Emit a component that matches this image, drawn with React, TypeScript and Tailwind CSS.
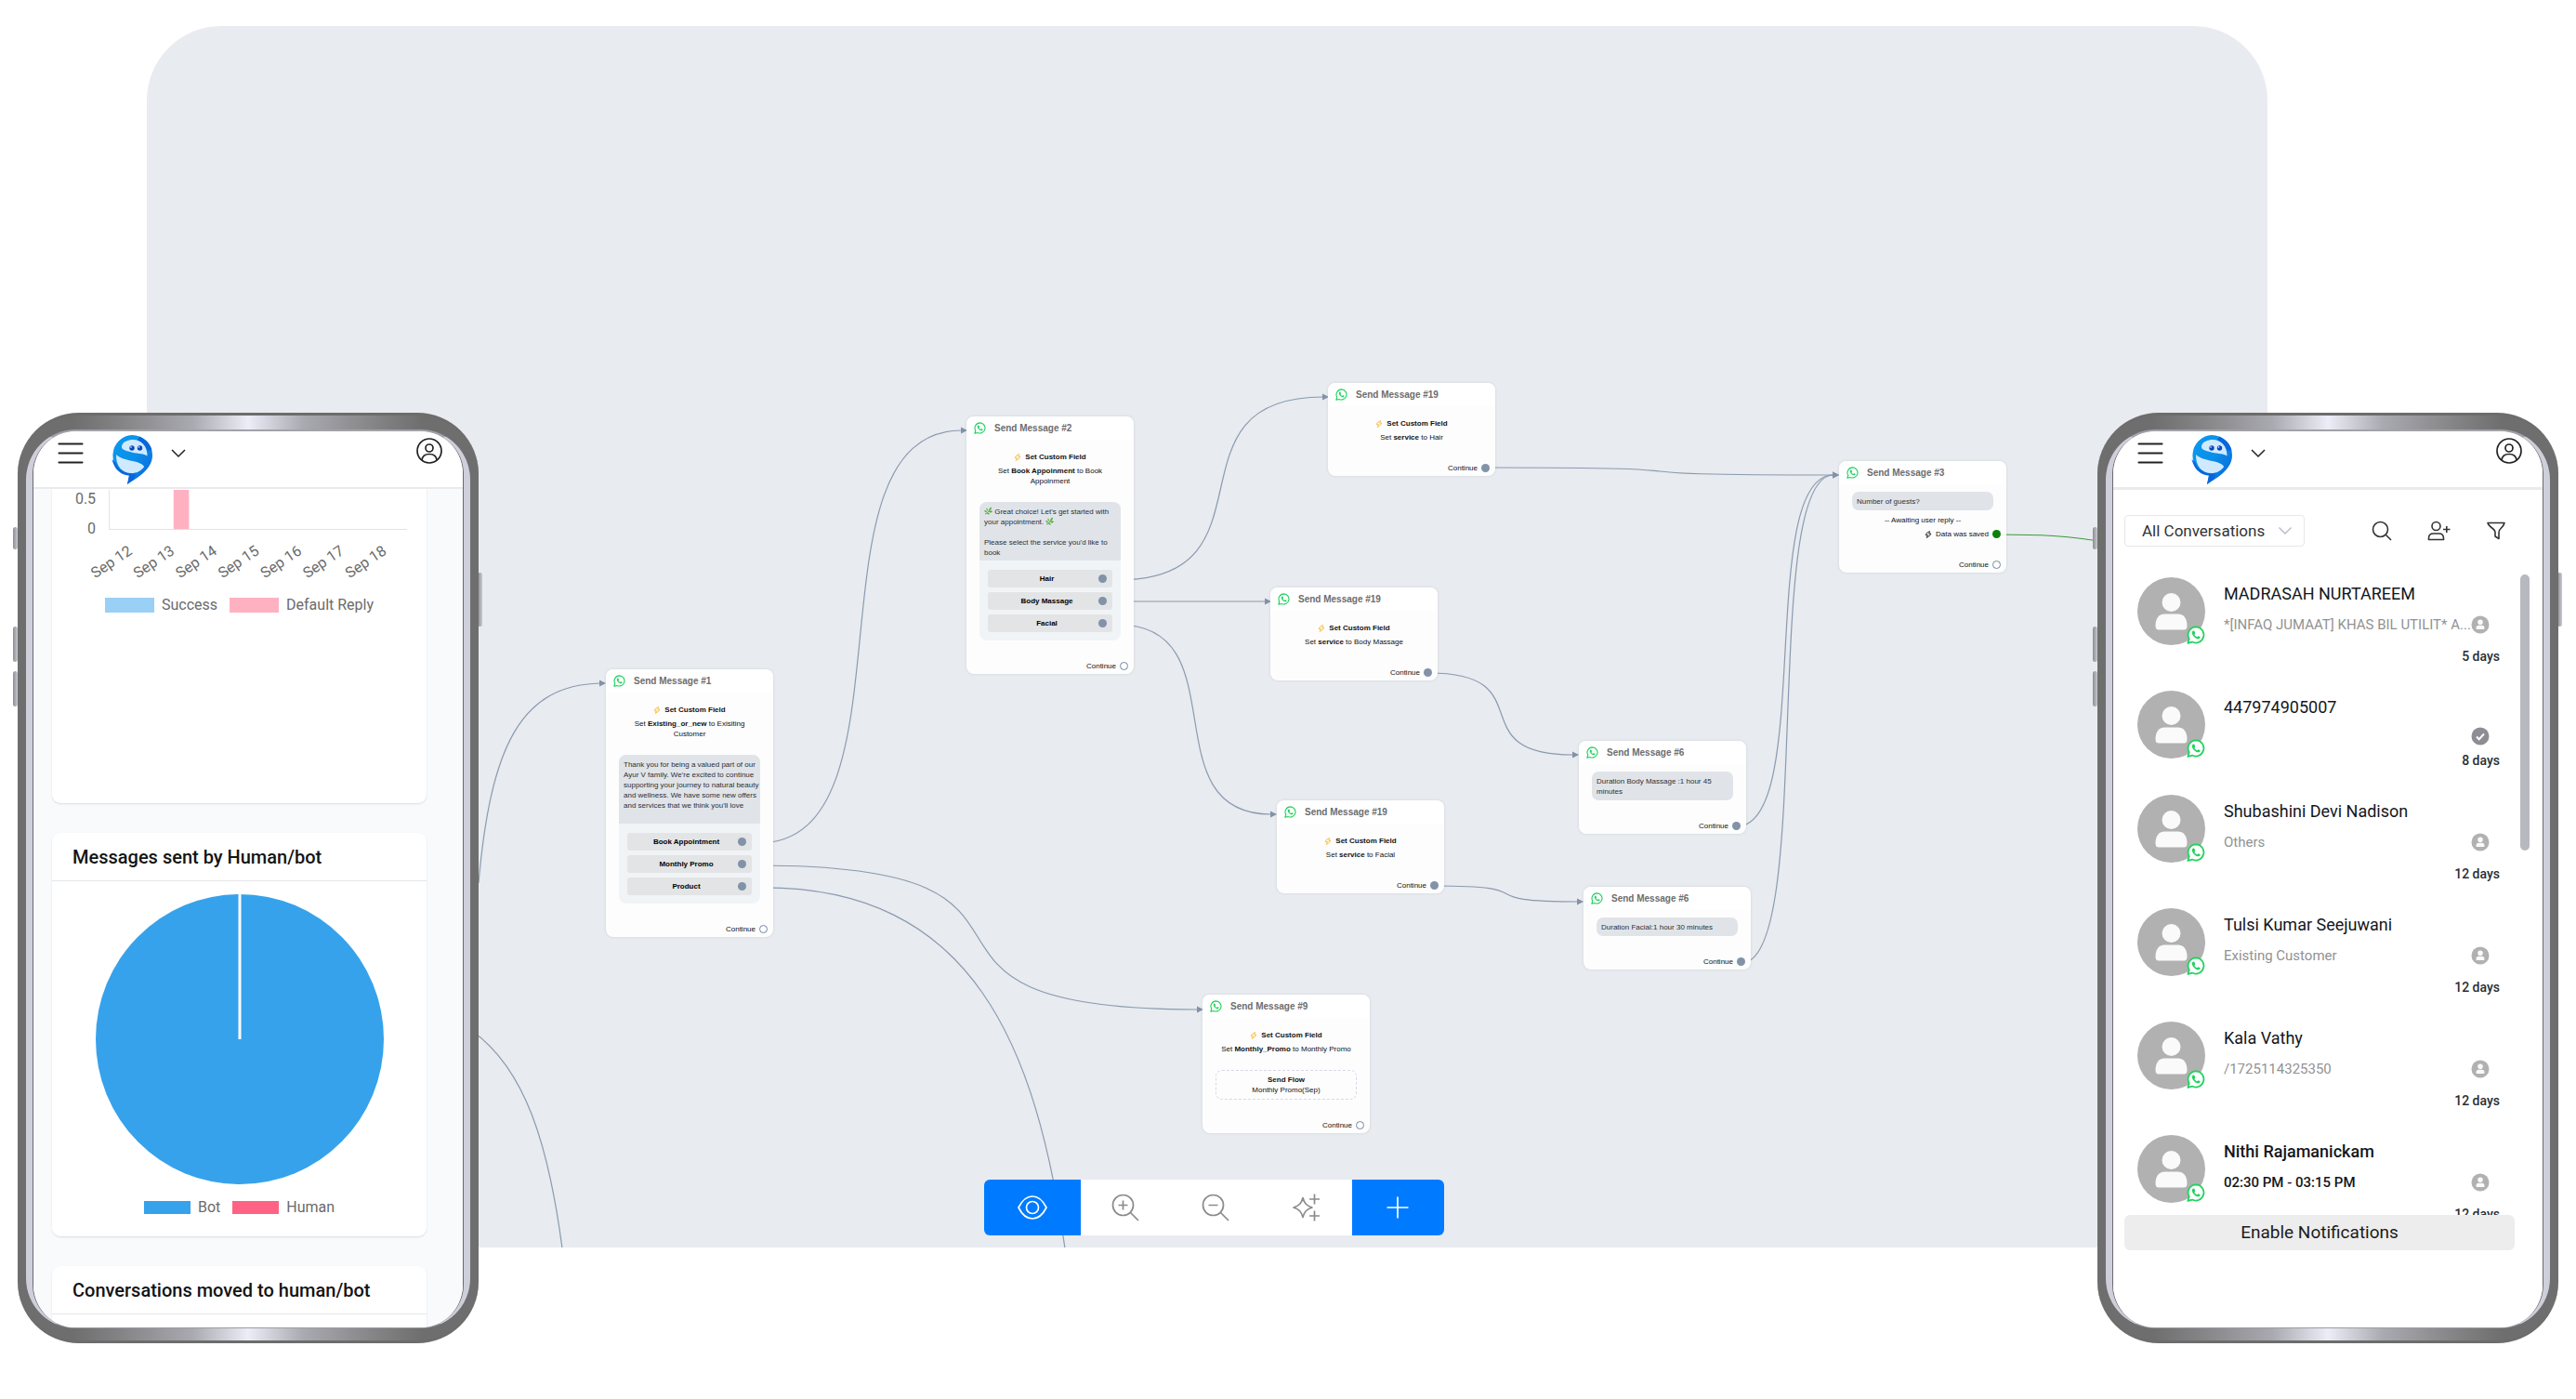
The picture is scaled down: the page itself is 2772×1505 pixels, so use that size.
import React from "react";

/* ---------- icons ---------- */

function WhatsAppIcon({ className, fill = "none" }: { className?: string; fill?: string }) {
  return (
    <svg viewBox="0 0 24 24" className={className} aria-hidden="true">
      <path
        d="M12.2 1.6a10.3 10.3 0 0 0-8.9 15.5L1.6 22.6l5.6-1.5A10.3 10.3 0 1 0 12.2 1.6Z"
        fill={fill}
        stroke="#1fd25e"
        strokeWidth="2.1"
        strokeLinejoin="round"
      />
      <path
        d="M8.7 6.6c-.5 0-1.7 1-1.7 2.6 0 3.400 4.400 7.900 8.100 7.900 1.500 0 2.600-1 2.600-2 0-.4-2.400-1.700-2.800-1.600-.5.1-1 1.300-1.400 1.300-.8 0-3.300-2.300-3.400-3.200 0-.4 1-.9 1-1.400 0-.6-.9-3.100-1.200-3.400-.2-.2-.8-.2-1.200-.2Z"
        fill="#1fd25e"
      />
    </svg>
  );
}

function Bolt({ className }: { className?: string }) {
  return (
    <svg viewBox="0 0 14 16" className={className} fill="none" stroke="currentColor" strokeWidth="1.7" strokeLinejoin="round" aria-hidden="true">
      <path d="M10 1 3 5.500 1.500 9.500 6 9 3.500 15 11 9.500 12.500 6 8.500 6.500 10 1Z" />
    </svg>
  );
}

function Leaf() {
  return (
    <svg viewBox="0 0 18 18" className="inline-block size-[9px] align-[-1px]" role="img" aria-label="herb">
      <path d="M2 16C7 15 10 11 12 6" stroke="#3f8a2c" strokeWidth="1.5" fill="none" />
      <path d="M11 9c-1-4 1-7 4-8 2 3 0 7-4 8Z" fill="#5cb644" />
      <path d="M10 11c3-3 6-2 8-1-1 3-5 4-8 1Z" fill="#4ba436" />
      <path d="M8 10C5 9 4 6 5 3c3 1 4 4 3 7Z" fill="#6cc551" />
      <path d="M6 13c-3 0-5-2-5.500-5C4 8 6 10 6 13Z" fill="#4ba436" />
      <path d="M6 14c2-1 5 0 6 2-2 2-5 1-6-2Z" fill="#5cb644" />
    </svg>
  );
}

function BotLogo() {
  return (
    <svg viewBox="0 0 44 54" className="h-[54px] w-11" role="img" aria-label="Chatbot logo">
      <defs>
        <linearGradient id="logo-ring" x1="0" y1="0" x2="1" y2="1">
          <stop offset="0" stopColor="#0a9bf0" />
          <stop offset=".5" stopColor="#0b8ee9" />
          <stop offset="1" stopColor="#0a5fd8" />
        </linearGradient>
      </defs>
      <path d="M22 0a22 22 0 0 1 22 22c0 9-6 16-13 21.500-5 4-10 6-14 9.500l2-9.500A22 22 0 0 1 22 0Z" fill="url(#logo-ring)" />
      <path d="M30 1.500c7 3 12 8 13.500 15l-5 0C37 12 33 8 28 6Z" fill="#0867dc" />
      <path d="M.5 26C3 37 10 43 19 43.500L17 53l7-5 2-6C14 42 6 36 4.500 30Z" fill="#0a66dc" />
      <path d="M11 12C12 7 18 5 23 5c9 0 15.500 7 15.500 17.500C34 19.500 26 20 20 18c-6-1.500-9.500-2.500-9-6Z" fill="#cfeaff" />
      <path d="M5 21c5 5 14 6 20 7.500 6 1.500 10 3.500 10 6C31 39 27 41 21.500 41 12 41 4.500 34 5 21Z" fill="#cfeaff" />
      <circle cx="22" cy="14" r="2.700" fill="#0a48bd" />
      <circle cx="30.500" cy="14" r="2.700" fill="#0a48bd" />
      <circle cx="21" cy="13" r=".8" fill="#fff" />
      <circle cx="29.500" cy="13" r=".8" fill="#fff" />
    </svg>
  );
}

/* ---------- flow canvas ---------- */

type Port = "open" | "linked";

function Dot({ port = "open" }: { port?: Port }) {
  return port === "linked" ? (
    <span className="size-[9px] shrink-0 rounded-full bg-[#8292a8]" />
  ) : (
    <span className="size-[9px] shrink-0 rounded-full border border-[#7386a0] bg-white" />
  );
}

function FlowNode({
  x,
  y,
  title,
  port = "open",
  children,
}: {
  x: number;
  y: number;
  title: string;
  port?: Port;
  children: React.ReactNode;
}) {
  return (
    <article
      className="absolute w-[180px] overflow-hidden rounded-[8px] bg-[#fdfdfd] text-center text-[8px] leading-[11px] text-[#111] shadow-[0_0_3px_rgba(60,70,90,0.15)]"
      style={{ left: x, top: y }}
    >
      <header className="flex h-[25px] items-center gap-[9px] bg-white px-2">
        <WhatsAppIcon className="size-[13px]" />
        <h3 className="text-[10px] font-bold text-[#6d6d6d]">{title}</h3>
      </header>
      <div className="px-[14px]">{children}</div>
      <footer className="mt-[22px] flex items-center justify-end gap-1 pr-[6px] pb-[3px]">
        Continue <Dot port={port} />
      </footer>
    </article>
  );
}

function SetField({ children }: { children: React.ReactNode }) {
  return (
    <div className="pt-[13px]">
      <p className="flex items-center justify-center gap-1 font-bold">
        <Bolt className="size-2 text-[#f7b733]" />
        Set Custom Field
      </p>
      <p className="mt-1">{children}</p>
    </div>
  );
}

function Choices({ message, options }: { message: React.ReactNode; options: string[] }) {
  return (
    <div className="mt-[17px] overflow-hidden rounded-[8px] bg-[#f1f4f6]">
      <div className="bg-[#e0e4e9] px-[5px] pt-[5px] pb-[3px] text-left whitespace-nowrap text-[#2c2f34]">{message}</div>
      <ul className="flex flex-col gap-[5px] px-[9px] pt-[10px] pb-[9px]">
        {options.map((o) => (
          <li key={o}>
            <button className="relative flex h-[19px] w-full items-center rounded-[3px] bg-[#e2e4e6] pr-[6px] font-bold text-black">
              <span className="grow pl-2">{o}</span>
              <Dot port="linked" />
            </button>
          </li>
        ))}
      </ul>
    </div>
  );
}

function Bubble({ children }: { children: React.ReactNode }) {
  return <div className="mt-2 rounded-[7px] bg-[#e0e4e9] px-[5px] pt-[5px] pb-1 text-left text-[#2c2f34]">{children}</div>;
}

const links: [number, number, number, number][] = [
  [658, 879, 883, 435],
  [658, 903, 1137, 1058],
  [1045, 596, 1272, 399],
  [1045, 619, 1210, 619],
  [1045, 644, 1216, 848],
  [1442, 475, 1821, 483],
  [1380, 696, 1541, 784],
  [1386, 925, 1546, 942],
  [1711, 861, 1821, 483],
  [1716, 1008, 1821, 483],
];

function Links() {
  return (
    <svg className="absolute top-0 left-0 size-full" fill="none" stroke="#8a9ab0" strokeWidth="1.2" aria-hidden="true">
      {links.map(([x1, y1, x2, y2], i) => {
        const end = x2 - 6;
        const k = (end - x1) * 0.8;
        return (
          <g key={i}>
            <path d={`M${x1} ${y1}C${x1 + k} ${y1} ${end - k} ${y2} ${end} ${y2}`} />
            <path d={`M${x2} ${y2}l-7 -3.500v7Z`} fill="#8292a8" stroke="none" />
          </g>
        );
      })}
      <path d="M357 922C370 775 402 709 488 707" />
      <path d="M494 707l-7 -3.500v7Z" fill="#8292a8" stroke="none" />
      <path d="M658 927C892 924 957 1102 988 1315" />
      <path d="M350 1081C407 1122 432 1202 447 1315" />
      <path d="M1991 547C2032 547 2072 548 2110 556" stroke="#3c9b3c" />
    </svg>
  );
}

function Toolbar() {
  const icon = "size-8";
  return (
    <div className="relative mb-[13px] ml-[14px] flex h-[60px] w-[495px] overflow-hidden rounded-[6px] bg-white" role="toolbar" aria-label="Canvas tools">
      <button aria-label="Preview" className="grid w-[104px] place-items-center bg-[#007bff] text-white">
        <svg viewBox="0 0 32 32" className={icon} fill="none" stroke="currentColor" strokeWidth="1.700">
          <path d="M1 16C5 8 10 4 16 4s11 4 15 12c-4 8-9 12-15 12S5 24 1 16Z" strokeLinejoin="round" />
          <circle cx="16" cy="16" r="6.500" />
        </svg>
      </button>
      <div className="flex grow justify-around text-[#8b8b8b]">
        <button aria-label="Zoom in" className="grid grow place-items-center">
          <svg viewBox="0 0 32 32" className={icon} fill="none" stroke="currentColor" strokeWidth="1.700">
            <circle cx="13.500" cy="13.500" r="11" />
            <path d="M21.500 21.500 30 30M8.500 13.500h10M13.500 8.500v10" />
          </svg>
        </button>
        <button aria-label="Zoom out" className="grid grow place-items-center">
          <svg viewBox="0 0 32 32" className={icon} fill="none" stroke="currentColor" strokeWidth="1.700">
            <circle cx="13.500" cy="13.500" r="11" />
            <path d="M21.500 21.500 30 30M8.500 13.500h10" />
          </svg>
        </button>
        <button aria-label="Auto arrange" className="grid grow place-items-center">
          <svg viewBox="0 0 32 32" className={icon} fill="none" stroke="currentColor" strokeWidth="1.700">
            <path d="M12 5.500c1.500 6 4 8.500 10 10.500-6 2-8.500 4.500-10 10.500C10.500 20.500 8 18 2 16c6-2 8.500-4.500 10-10.500Z" strokeLinejoin="round" />
            <path d="M19 7h11M24.500 1.500v11M19 25h11M24.500 19.500v11" />
          </svg>
        </button>
      </div>
      <button aria-label="Add step" className="grid w-[99px] place-items-center rounded-l-none bg-[#007bff] text-white">
        <svg viewBox="0 0 32 32" className={icon} fill="none" stroke="currentColor" strokeWidth="1.700">
          <path d="M4.500 16h23M16 4.500v23" />
        </svg>
      </button>
    </div>
  );
}

function FlowCanvas() {
  return (
    <section
      aria-label="Flow builder"
      className="relative col-start-1 row-start-1 mt-7 mr-[332px] mb-[163px] ml-[158px] flex items-end justify-center overflow-hidden rounded-t-[80px] bg-[#e8ebef] font-['Liberation_Sans',Arial,sans-serif]"
    >
      <Links />
      <FlowNode x={494} y={692} title="Send Message #1">
        <SetField>
          Set <b>Existing_or_new</b> to Exisiting
          <br />
          Customer
        </SetField>
        <Choices
          message={
            <>
              Thank you for being a valued part of our
              <br />
              Ayur V family. We're excited to continue
              <br />
              supporting your journey to natural beauty
              <br />
              and wellness. We have some new offers
              <br />
              and services that we think you'll love
              <br />
              &nbsp;
            </>
          }
          options={["Book Appointment", "Monthly Promo", "Product"]}
        />
      </FlowNode>
      <FlowNode x={882} y={420} title="Send Message #2">
        <SetField>
          Set <b>Book Appoinment</b> to Book
          <br />
          Appoinment
        </SetField>
        <Choices
          message={
            <>
              <Leaf /> Great choice! Let's get started with
              <br />
              your appointment. <Leaf />
              <br />
              <br />
              Please select the service you'd like to
              <br />
              book
            </>
          }
          options={["Hair", "Body Massage", "Facial"]}
        />
      </FlowNode>
      <FlowNode x={1271} y={384} title="Send Message #19" port="linked">
        <SetField>
          Set <b>service</b> to Hair
        </SetField>
      </FlowNode>
      <FlowNode x={1209} y={604} title="Send Message #19" port="linked">
        <SetField>
          Set <b>service</b> to Body Massage
        </SetField>
      </FlowNode>
      <FlowNode x={1216} y={833} title="Send Message #19" port="linked">
        <SetField>
          Set <b>service</b> to Facial
        </SetField>
      </FlowNode>
      <FlowNode x={1541} y={769} title="Send Message #6" port="linked">
        <Bubble>
          Duration Body Massage :1 hour 45
          <br />
          minutes
        </Bubble>
      </FlowNode>
      <FlowNode x={1546} y={926} title="Send Message #6" port="linked">
        <Bubble>Duration Facial:1 hour 30 minutes</Bubble>
      </FlowNode>
      <FlowNode x={1821} y={468} title="Send Message #3">
        <Bubble>Number of guests?</Bubble>
        <p className="mt-[5px]">-- Awaiting user reply --</p>
        <p className="-mr-2 mt-1 flex items-center justify-end gap-1">
          <Bolt className="size-2" />
          Data was saved
          <span className="size-[9px] rounded-full bg-[#0a820a]" />
        </p>
      </FlowNode>
      <FlowNode x={1136} y={1042} title="Send Message #9">
        <SetField>
          Set <b>Monthly_Promo</b> to Monthly Promo
        </SetField>
        <div className="mt-[17px] rounded-[7px] border border-dashed border-[#d5dae6] py-1">
          <p className="font-bold">Send Flow</p>
          <p>Monthly Promo(Sep)</p>
        </div>
      </FlowNode>
      <Toolbar />
    </section>
  );
}

/* ---------- phones ---------- */

function Phone({ side, label, children }: { side: "left" | "right"; label: string; children: React.ReactNode }) {
  const rail = "absolute w-[5px] rounded-sm bg-linear-to-r from-[#8d8d93] to-[#c9c9d2]";
  return (
    <section
      aria-label={label}
      className={
        "relative z-10 col-start-1 row-start-1 mx-[19px] mb-[60px] h-[1001px] w-[496px] self-end font-[Roboto,sans-serif] " +
        (side === "left" ? "justify-self-start" : "justify-self-end")
      }
    >
      <span className={rail + " top-[123px] -left-[5px] h-6"} />
      <span className={rail + " top-[230px] -left-[5px] h-[38px]"} />
      <span className={rail + " top-[278px] -left-[5px] h-[38px]"} />
      <span className={rail + " top-[172px] -right-[4px] h-[58px]"} />
      <div className="relative h-full rounded-[66px] border-y-[3px] border-[#6c6c6c] bg-[linear-gradient(90deg,#6e6e6e_0%,#6e6e6e_12%,#838385_22%,#a9a9b0_38%,#ededf8_50%,#a9a9b0_62%,#838385_78%,#6e6e6e_88%,#6e6e6e_100%)] px-[9px] pt-[15px] pb-[13px]">
        <div className="h-full rounded-[54px] border-x-[7px] border-t-2 border-b border-[#cfcfdb] border-t-[#a2a2a8] border-b-[#9c9ca2]">
          <div className="flex h-full flex-col overflow-hidden rounded-[46px] border-x border-[#6a6a70] bg-white">{children}</div>
        </div>
      </div>
    </section>
  );
}

function PhoneHeader() {
  return (
    <header className="flex h-[62px] shrink-0 items-start border-b-2 border-[#e8eaec] bg-white pr-[21px] pl-[26px] text-[#222]">
      <button aria-label="Menu" className="mt-3">
        <svg viewBox="0 0 28 23" className="h-[23px] w-7" stroke="currentColor" strokeWidth="2.100" strokeLinecap="round">
          <path d="M1.500 1.500h25M1.500 11.500h25M1.500 21.500h25" />
        </svg>
      </button>
      <div className="ml-[30px] pt-1">
        <BotLogo />
      </div>
      <button aria-label="Switch bot" className="mt-[19px] ml-5">
        <svg viewBox="0 0 16 10" className="h-[10px] w-4" fill="none" stroke="currentColor" strokeWidth="1.500">
          <path d="m1 1 7 7 7-7" />
        </svg>
      </button>
      <button aria-label="Account" className="mt-[6px] ml-auto">
        <svg viewBox="0 0 30 30" className="size-[30px]" fill="none" stroke="currentColor" strokeWidth="1.700">
          <circle cx="15" cy="15" r="13" />
          <circle cx="15" cy="12" r="4" />
          <path d="M7 25c.5-4.500 3.500-6.500 8-6.500s7.500 2 8 6.500" />
        </svg>
      </button>
    </header>
  );
}

function Legend({ items, swatch }: { items: { label: string; color: string }[]; swatch: string }) {
  return (
    <ul className="flex justify-center gap-[13px] text-base leading-5 text-[#6b6b6b]">
      {items.map((i) => (
        <li key={i.label} className="flex items-center gap-2">
          <span className={swatch + " " + i.color} />
          {i.label}
        </li>
      ))}
    </ul>
  );
}

const days = ["Sep 12", "Sep 13", "Sep 14", "Sep 15", "Sep 16", "Sep 17", "Sep 18"];
const cardClass = "shrink-0 rounded-[9px] bg-white shadow-[0_1px_2px_rgba(0,0,0,0.12)]";
const titleClass = "flex h-[52px] items-center border-b border-[#e4e6e8] px-[22px] text-[20px] font-medium text-[#141414]";

function AnalyticsPhone() {
  return (
    <Phone side="left" label="Analytics">
      <PhoneHeader />
      <div className="flex grow flex-col gap-8 overflow-hidden bg-[#f8fafc] pr-[39px] pl-5">
        <section className={cardClass + " h-[338px] rounded-t-none"}>
          <svg viewBox="0 0 402 104" className="w-full" role="img" aria-label="Replies per day">
            <g fontSize="16" fill="#6b6b6b" textAnchor="end">
              <text x="47" y="16">0.5</text>
              <text x="47" y="48">0</text>
              {days.map((d, i) => (
                <text key={d} transform={`translate(${87 + i * 45.500} 69) rotate(-34)`}>
                  {d}
                </text>
              ))}
            </g>
            <path d="M61.500 1v42.500H381" fill="none" stroke="#e2e2e2" />
            <rect x="130.500" y="1" width="16.500" height="42" fill="#ffb1c1" />
          </svg>
          <div className="mt-[11px]">
            <Legend
              swatch="h-[16px] w-[53px]"
              items={[
                { label: "Success", color: "bg-[#9ad0f5]" },
                { label: "Default Reply", color: "bg-[#ffb1c1]" },
              ]}
            />
          </div>
        </section>
        <section className={cardClass + " h-[434px]"}>
          <h2 className={titleClass}>Messages sent by Human/bot</h2>
          <svg viewBox="0 0 312 314" className="mx-auto mt-[13px] h-[314px] w-[312px]" role="img" aria-label="Messages by sender">
            <ellipse cx="156" cy="157" rx="155" ry="156" fill="#36a2eb" />
            <path d="M156 0v157" stroke="#fff" strokeWidth="3" />
          </svg>
          <div className="mt-[14px]">
            <Legend
              swatch="h-[14px] w-[50px]"
              items={[
                { label: "Bot", color: "bg-[#36a2eb]" },
                { label: "Human", color: "bg-[#ff6384]" },
              ]}
            />
          </div>
        </section>
        <section className={cardClass + " h-[120px]"}>
          <h2 className={titleClass}>Conversations moved to human/bot</h2>
        </section>
      </div>
    </Phone>
  );
}

type Chat = { name: string; text?: string; age: string; done?: boolean; unread?: boolean };

const chats: Chat[] = [
  { name: "MADRASAH NURTAREEM", text: "*[INFAQ JUMAAT] KHAS BIL UTILIT* A...", age: "5 days" },
  { name: "447974905007", age: "8 days", done: true },
  { name: "Shubashini Devi Nadison", text: "Others", age: "12 days" },
  { name: "Tulsi Kumar Seejuwani", text: "Existing Customer", age: "12 days" },
  { name: "Kala Vathy", text: "/1725114325350", age: "12 days" },
  { name: "Nithi Rajamanickam", text: "02:30 PM - 03:15 PM", age: "12 days", unread: true },
];

function ChatRow({ chat }: { chat: Chat }) {
  return (
    <li className="flex gap-5 pr-[32px] pl-[14px]">
      <div className="relative size-[73px] shrink-0">
        <svg viewBox="0 0 73 73" className="size-[73px]" aria-hidden="true">
          <circle cx="36.500" cy="36.500" r="36.500" fill="#b1b1b1" />
          <circle cx="36.500" cy="27" r="10" fill="#fafafa" />
          <path d="M19.500 52c0-8 4-12.500 10-12.500h14c6 0 10 4.500 10 12.500 0 3-1 4.500-3.500 4.500H23c-2.500 0-3.500-1.500-3.500-4.500Z" fill="#fafafa" />
        </svg>
        <WhatsAppIcon className="absolute right-0 bottom-[1px] size-5" fill="#fff" />
      </div>
      <div className="min-w-0 grow pt-[6px] pb-[27px]">
        <p className={"text-[18px] leading-6 text-[#14171c] " + (chat.unread ? "font-medium" : "")}>{chat.name}</p>
        <div className={"mt-[9px] flex items-center justify-between " + (chat.text ? "h-[29px] pb-[5px]" : "h-[19px]")}>
          <p className={"text-[15px] whitespace-nowrap " + (chat.unread ? "font-medium text-[#14171c]" : "text-[#929292]")}>{chat.text}</p>
          <svg viewBox="0 0 20 20" className="mr-[11px] ml-auto size-5 shrink-0" role="img" aria-label={chat.done ? "Resolved" : "Assigned"}>
            <circle cx="10" cy="10" r="9.500" fill={chat.done ? "#8e8d94" : "#b1b1b1"} />
            {chat.done ? (
              <path d="m6 10.500 2.700 2.700L14 7.500" fill="none" stroke="#fff" strokeWidth="2" />
            ) : (
              <path d="M10 4.500a2.800 2.800 0 1 1 0 5.600 2.800 2.800 0 0 1 0-5.600ZM5.500 14c0-2 1-3.200 2.700-3.200h3.600c1.700 0 2.700 1.200 2.700 3.200 0 .7-.3 1-.9 1H6.400c-.6 0-.9-.3-.9-1Z" fill="#fafafa" />
            )}
          </svg>
        </div>
        <p className="mt-[7px] text-right text-sm leading-5 font-medium text-[#2b2e33]">{chat.age}</p>
      </div>
    </li>
  );
}

function InboxPhone() {
  return (
    <Phone side="right" label="Inbox">
      <PhoneHeader />
      <div className="flex grow flex-col overflow-hidden border-t border-[#e8eaec] bg-white pr-[14px] pb-[83px] pl-[12px]">
        <div className="mt-[27px] flex h-[34px] shrink-0 items-center text-[#333]">
          <label className="relative flex h-full w-[194px] items-center">
            <span className="sr-only">Conversation filter</span>
            <select className="h-full w-full appearance-none rounded-[4px] border border-[#e6e7e9] bg-white pl-[18px] text-[17px] leading-6 text-[#333]">
              <option>All Conversations</option>
            </select>
            <svg viewBox="0 0 14 8" className="pointer-events-none absolute right-[14px] h-2 w-[14px]" fill="none" stroke="#b6bbc6" strokeWidth="1.400">
              <path d="m.5.500 6.500 6.500L13.500.500" />
            </svg>
          </label>
          <button aria-label="Search" className="ml-[72px]">
            <svg viewBox="0 0 22 22" className="size-[22px]" fill="none" stroke="currentColor" strokeWidth="1.600">
              <circle cx="9.500" cy="9.500" r="8" />
              <path d="m15.500 15.500 5.500 5.500" />
            </svg>
          </button>
          <button aria-label="Add contact" className="ml-[38px]">
            <svg viewBox="0 0 26 22" className="h-[22px] w-[26px]" fill="none" stroke="currentColor" strokeWidth="1.600">
              <circle cx="9.500" cy="6" r="4.500" />
              <path d="M1.500 20.500v-1.500c0-3 2-5 5-5h6c3 0 5 2 5 5v1.500ZM17 9.500h7.500M20.800 6v7" strokeLinejoin="round" />
            </svg>
          </button>
          <button aria-label="Filter" className="ml-[37px]">
            <svg viewBox="0 0 22 22" className="size-[22px]" fill="none" stroke="currentColor" strokeWidth="1.600" strokeLinejoin="round">
              <path d="M2 2.500h18c-.5 2.500-2 4-3.500 5.500-1.500 1.500-2.500 2.500-2.500 4.500v7l-4-2.500V12.500C10 10.500 8 9 6 7.500 4 6 2.500 5 2 2.500Z" />
            </svg>
          </button>
        </div>
        <div className="mt-[30px] flex min-h-0 grow">
          <ul className="h-full grow overflow-hidden pt-[3px]">
            {chats.map((c) => (
              <ChatRow key={c.name} chat={c} />
            ))}
          </ul>
          <span className="-ml-[10px] h-[297px] w-[10px] shrink-0 rounded-full bg-[#b8b8c1]" />
        </div>
        <button className="mr-[16px] h-[38px] shrink-0 rounded-[6px] bg-[#ededed] text-[19px] text-[#1c1c1c]">Enable Notifications</button>
      </div>
    </Phone>
  );
}

export default function App() {
  return (
    <main className="grid min-h-screen w-full grid-cols-1 overflow-hidden bg-white">
      <FlowCanvas />
      <AnalyticsPhone />
      <InboxPhone />
    </main>
  );
}
